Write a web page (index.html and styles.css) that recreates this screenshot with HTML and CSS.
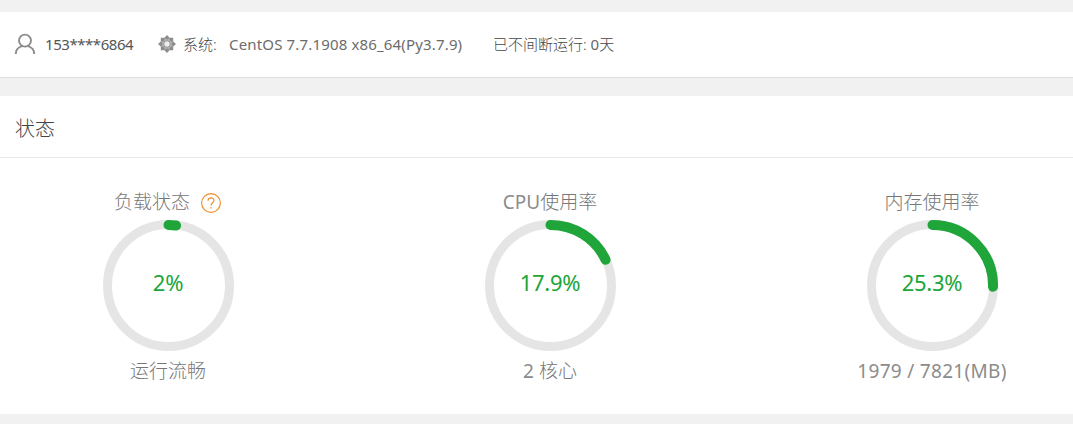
FILE: index.html
```html
<!DOCTYPE html>
<html lang="zh-CN">
<head>
<meta charset="utf-8">
<title>状态</title>
<link rel="stylesheet" href="styles.css">
</head>
<body>
<header class="topbar">
  <svg class="user-icon" viewBox="0 0 22 22"><circle cx="11" cy="7.6" r="6"/><path d="M1.8 21C1.8 16.5 4.6 14.3 8 13.2M14 13.2C17.4 14.3 20.2 16.5 20.2 21"/></svg>
  <span class="account">153****6864</span>
  <svg class="system-icon" viewBox="-9 -9 18 18">
    <path class="petals" d="M0-9L2.6-6.2H6.2V-2.6L9 0L6.2 2.6V6.2H2.6L0 9L-2.6 6.2H-6.2V2.6L-9 0L-6.2-2.6V-6.2H-2.6Z"/>
    <circle class="hub" r="4.2"/>
    <path class="spokes" d="M-2.4-6L-1-3M2.4-6L1-3M-2.4 6L-1 3M2.4 6L1 3M-6-2.4L-3-1M-6 2.4L-3 1M6-2.4L3-1M6 2.4L3 1"/>
    <circle class="core" r="2.7"/>
  </svg>
  <span class="label">系统:</span>
  <span class="system">CentOS 7.7.1908 x86_64(Py3.7.9)</span>
  <span class="uptime">已不间断运行: <span class="latin-dark">0</span>天</span>
</header>
<main class="panel">
  <h1 class="panel-title">状态</h1>
  <div class="gauges">
    <section class="gauge">
      <div class="caption">负载状态<svg class="help" viewBox="0 0 20 20"><circle cx="10" cy="10" r="9.4"/><path d="M7 7.8C7 4 13 4 13 7.6C13 9.8 10 9.8 10 12.6M10 14.1V15.6"/></svg></div>
      <div class="dial"><svg viewBox="0 0 132 132"><circle class="track" cx="66.5" cy="66.5" r="61"/><path class="value" d="M66.5 6A60.5 60.5 0 0 1 74.1 6.5"/></svg><span class="percent">2%</span></div>
      <div class="detail">运行流畅</div>
    </section>
    <section class="gauge">
      <div class="caption"><span class="latin">CPU</span>使用率</div>
      <div class="dial"><svg viewBox="0 0 132 132"><circle class="track" cx="66.5" cy="66.5" r="61"/><path class="value" d="M66.5 6A60.5 60.5 0 0 1 121.6 40.8"/></svg><span class="percent">17.9%</span></div>
      <div class="detail"><span class="latin">2</span> 核心</div>
    </section>
    <section class="gauge">
      <div class="caption">内存使用率</div>
      <div class="dial"><svg viewBox="0 0 132 132"><circle class="track" cx="66.5" cy="66.5" r="61"/><path class="value" d="M66.5 6A60.5 60.5 0 0 1 127 67.7"/></svg><span class="percent">25.3%</span></div>
      <div class="detail memory">1979 / 7821(MB)</div>
    </section>
  </div>
</main>
</body>
</html>
```
FILE: styles.css
```css
* { box-sizing: border-box; }
body {
  margin: 0;
  padding-top: 12px;
  height: 424px;
  overflow: hidden;
  background: #f1f1f1;
  font-family: "Noto Sans", "Noto Sans CJK SC", sans-serif;
  color: #6c6c6c;
}
.topbar {
  display: flex;
  align-items: center;
  height: 66px;
  padding-left: 14px;
  background: #fff;
  border-bottom: 1px solid #ddd;
  font-size: 15px;
  line-height: 22px;
  white-space: nowrap;
}
.topbar > span { margin-top: -2px; }
.user-icon { width: 22px; height: 22px; margin-top: -1px; margin-right: 9px; fill: none; stroke: #8c8c8c; stroke-width: 1.9; }
.account { width: 88px; margin-right: 25px; color: #555; letter-spacing: -0.45px; }
.system-icon { width: 18px; height: 18px; margin-top: -1px; margin-right: 7px; }
.petals { fill: #8c8c8c; }
.hub { fill: none; stroke: #aaa; stroke-width: 1.6; }
.spokes { fill: none; stroke: #bbb; stroke-width: 0.8; }
.core { fill: #eee; }
.label { width: 46px; font-weight: 300; color: #444; }
.system { width: 264px; letter-spacing: 0.16px; }
.uptime { font-weight: 300; color: #444; }
.latin-dark { font-weight: 400; color: #666; }
.panel { height: 318px; margin-top: 18px; background: #fff; }
.panel-title {
  height: 62px;
  margin: 0;
  padding-left: 15px;
  border-bottom: 1px solid #e8e8e8;
  font-size: 20px;
  font-weight: 300;
  line-height: 65px;
  color: #444;
}
.gauges { display: flex; gap: 182px; padding: 28px 0 0 68px; }
.gauge {
  flex: none;
  display: flex;
  flex-direction: column;
  align-items: center;
  width: 200px;
  font-size: 19px;
  font-weight: 300;
  color: #777;
}
.caption { display: flex; align-items: center; height: 32px; line-height: 33px; }
.help { width: 20px; height: 20px; margin: 2px 0 0 11px; fill: none; stroke: #ee8c25; stroke-width: 1.15; }
.gauge:first-child .caption { margin-right: 1px; }
.dial { display: grid; width: 132px; height: 132px; margin-top: 1px; place-items: center; }
.dial > * { grid-area: 1 / 1; }
.dial svg { width: 132px; height: 132px; }
.track { fill: none; stroke: #e5e5e5; stroke-width: 9; }
.value { fill: none; stroke: #20a53a; stroke-width: 10; stroke-linecap: round; }
.percent { margin-top: -7px; font-size: 22px; font-weight: 400; line-height: 30px; color: #20a53a; letter-spacing: -0.3px; }
.detail { height: 36px; margin-top: 1px; line-height: 38px; white-space: pre; }
.latin, .memory { font-weight: 400; color: #8c8c8c; }
.memory { letter-spacing: 0.3px; }
```
